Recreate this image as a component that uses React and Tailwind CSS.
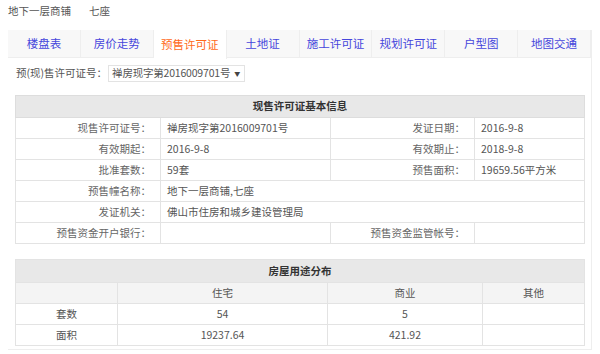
import React from 'react';

const tabs = ['楼盘表', '房价走势', '预售许可证', '土地证', '施工许可证', '规划许可证', '户型图', '地图交通'];

const Label = ({ children }) => (
    <td className="border border-[#e3e3e3] text-right pr-[9px] text-[#666]">{children}</td>
);

const Value = ({ children, span }) => (
    <td colSpan={span} className="border border-[#e3e3e3] pl-[6px] text-[#555]">{children}</td>
);

const App = () => {
    return (
        <div className="w-[600px] h-[354px] bg-white text-[10.5px] leading-none text-[#555] font-['Noto_Sans_CJK_SC','Noto_Sans',sans-serif]">
            {/* title */}
            <div className="flex h-[30px] items-start pt-[6px] pl-[8px] text-[#555]">
                <span>地下一层商铺</span>
                <span className="ml-[18px]">七座</span>
            </div>

            {/* panel */}
            <div className="mx-[8px] h-[320px] border-r border-b border-[#eeeeee]">
                <div className="flex h-[28px] bg-[#f8f8f8] border-b border-[#eeeeee]">
                    {tabs.map((t, i) => (
                        <div
                            key={t}
                            className={
                                i === 2
                                    ? 'w-[73px] h-[29px] flex items-center justify-center bg-white text-[#ff6a1a] text-[11.5px] border-r border-[#eeeeee]'
                                    : 'w-[73px] flex items-center justify-center text-[#4646dc] text-[11.5px] border-r border-[#eeeeee]'
                            }
                        >
                            {t}
                        </div>
                    ))}
                </div>

                <div className="flex items-center h-[31px] pl-[8px]">
                    <span className="text-[#555]">预(现)售许可证号：</span>
                    <div className="ml-[1px] flex items-center h-[17px] border border-[#e3e3e3] pl-[3px] pr-[4px] text-[#555] whitespace-nowrap">
                        <span className="tracking-[-0.2px]">禅房现字第2016009701号</span>
                        <span className="ml-[4px] text-[6px] text-[#444]">▼</span>
                    </div>
                </div>

                <div className="pl-[7px] pt-[6px]">
                    <table className="w-[569px] border-collapse table-fixed">
                        <colgroup>
                            <col className="w-[145px]" />
                            <col className="w-[170px]" />
                            <col className="w-[144px]" />
                            <col className="w-[110px]" />
                        </colgroup>
                        <tbody className="[&_tr]:h-[21px]">
                            <tr className="!h-[22px] bg-[#e8e8e8]">
                                <td colSpan={4} className="border border-[#dddddd] text-center font-bold text-[#333]">现售许可证基本信息</td>
                            </tr>
                            <tr>
                                <Label>现售许可证号：</Label>
                                <Value>禅房现字第2016009701号</Value>
                                <Label>发证日期：</Label>
                                <Value>2016-9-8</Value>
                            </tr>
                            <tr>
                                <Label>有效期起：</Label>
                                <Value>2016-9-8</Value>
                                <Label>有效期止：</Label>
                                <Value>2018-9-8</Value>
                            </tr>
                            <tr>
                                <Label>批准套数：</Label>
                                <Value>59套</Value>
                                <Label>预售面积：</Label>
                                <Value>19659.56平方米</Value>
                            </tr>
                            <tr>
                                <Label>预售幢名称：</Label>
                                <Value span={3}>地下一层商铺,七座</Value>
                            </tr>
                            <tr>
                                <Label>发证机关：</Label>
                                <Value span={3}>佛山市住房和城乡建设管理局</Value>
                            </tr>
                            <tr>
                                <Label>预售资金开户银行：</Label>
                                <Value></Value>
                                <Label>预售资金监管帐号：</Label>
                                <Value></Value>
                            </tr>
                        </tbody>
                    </table>

                    <table className="mt-[15px] w-[569px] border-collapse table-fixed text-center">
                        <colgroup>
                            <col className="w-[102px]" />
                            <col className="w-[210px]" />
                            <col className="w-[155px]" />
                            <col className="w-[102px]" />
                        </colgroup>
                        <tbody className="[&_td]:border [&_td]:border-[#e3e3e3] [&_tr]:h-[21px]">
                            <tr className="!h-[23px] bg-[#e8e8e8]">
                                <td colSpan={4} className="font-bold text-[#333]">房屋用途分布</td>
                            </tr>
                            <tr className="bg-[#f4f4f4]">
                                <td></td>
                                <td>住宅</td>
                                <td>商业</td>
                                <td>其他</td>
                            </tr>
                            <tr>
                                <td>套数</td>
                                <td>54</td>
                                <td>5</td>
                                <td></td>
                            </tr>
                            <tr>
                                <td>面积</td>
                                <td>19237.64</td>
                                <td>421.92</td>
                                <td></td>
                            </tr>
                        </tbody>
                    </table>
                </div>
            </div>
        </div>
    );
};

export default App;
